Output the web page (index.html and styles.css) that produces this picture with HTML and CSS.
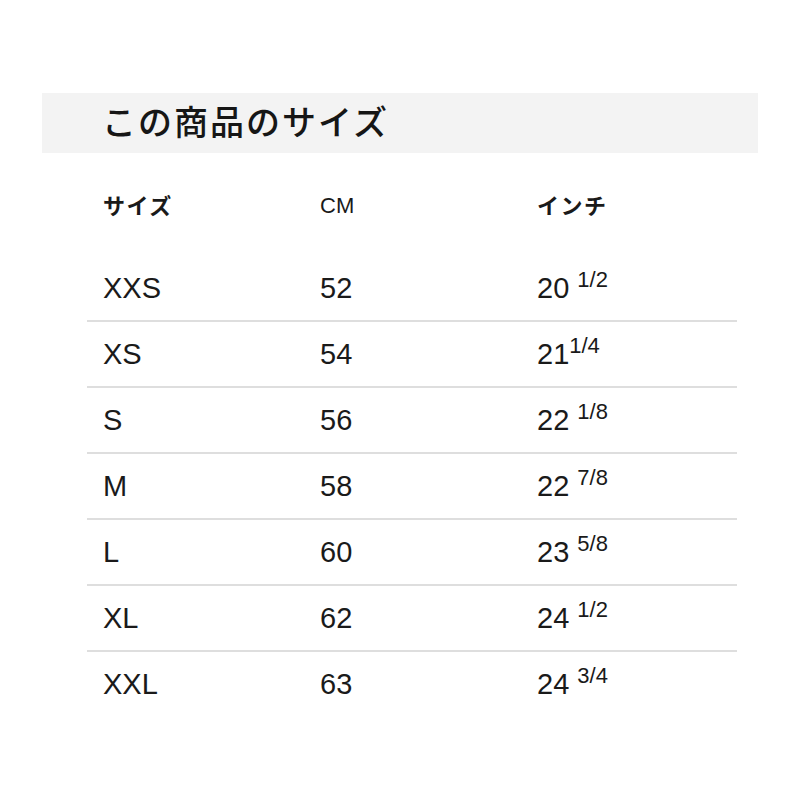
FILE: index.html
```html
<!DOCTYPE html>
<html lang="ja">
<head>
<meta charset="utf-8">
<link rel="stylesheet" href="styles.css">
</head>
<body>
<div class="page">
  <div class="band"><h1 class="title">この商品のサイズ</h1></div>
  <div class="table">
    <div class="row head">
      <div class="cell jp">サイズ</div>
      <div class="cell cm">CM</div>
      <div class="cell jp">インチ</div>
    </div>
    <div class="row"><div class="cell">XXS</div><div class="cell">52</div><div class="cell">20 <sup>1/2</sup></div></div>
    <div class="row"><div class="cell">XS</div><div class="cell">54</div><div class="cell">21<sup>1/4</sup></div></div>
    <div class="row"><div class="cell">S</div><div class="cell">56</div><div class="cell">22 <sup>1/8</sup></div></div>
    <div class="row"><div class="cell">M</div><div class="cell">58</div><div class="cell">22 <sup>7/8</sup></div></div>
    <div class="row"><div class="cell">L</div><div class="cell">60</div><div class="cell">23 <sup>5/8</sup></div></div>
    <div class="row"><div class="cell">XL</div><div class="cell">62</div><div class="cell">24 <sup>1/2</sup></div></div>
    <div class="row last"><div class="cell">XXL</div><div class="cell">63</div><div class="cell">24 <sup>3/4</sup></div></div>
  </div>
</div>
</body>
</html>
```

FILE: styles.css
```css
html, body {
  margin: 0;
  padding: 0;
  background: #fff;
}
.page {
  padding: 93px 42px 0 42px;
  font-family: "Liberation Sans", Arial, "Noto Sans CJK JP", sans-serif;
  color: #1a1a1a;
}
.band {
  background: #f3f3f3;
  height: 60px;
  display: flex;
  align-items: center;
  padding-left: 60px;
}
.title {
  margin: 0;
  font-family: "Noto Sans CJK JP", sans-serif;
  font-weight: 500;
  font-size: 34px;
  letter-spacing: 2px;
  line-height: 1;
  color: #161616;
  position: relative;
  top: -2px;
}
.table {
  margin: 0 21px 0 45px;
}
.row {
  display: grid;
  grid-template-columns: 217px 217px 1fr;
  padding-left: 16px;
  height: 64px;
  align-items: center;
  border-bottom: 2px solid #dedede;
  font-size: 29px;
}
.row.last {
  border-bottom: none;
}
.row.head {
  border-bottom: none;
  margin-top: 19px;
  margin-bottom: 20px;
  font-size: 22px;
}
.head .jp {
  font-family: "Noto Sans CJK JP", sans-serif;
  font-weight: 700;
  font-size: 22px;
  letter-spacing: 1.5px;
}
.head .cm {
  padding-top: 4px;
}
.cell {
  line-height: 1;
}
sup {
  font-size: 22px;
  vertical-align: 0;
  position: relative;
  top: -11px;
}
```
